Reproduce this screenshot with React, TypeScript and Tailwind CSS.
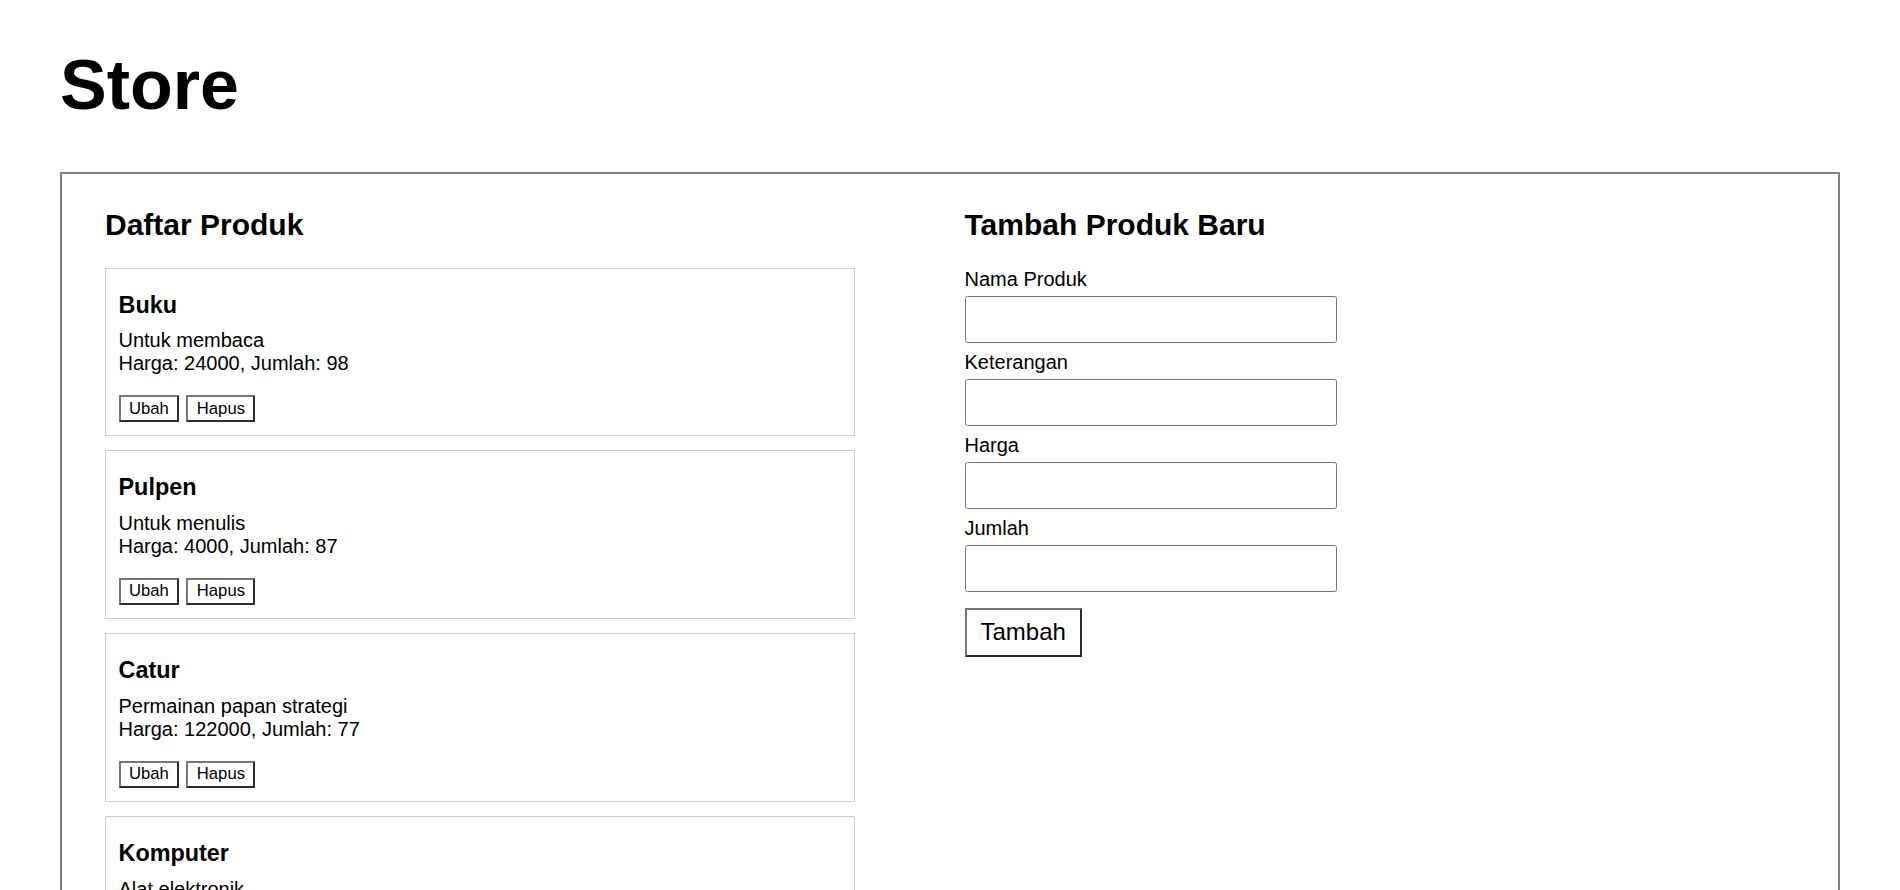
import { useState } from "react"

type Produk = {
  nama: string
  keterangan: string
  harga: number
  jumlah: number
}

const produkAwal: Produk[] = [
  { nama: "Buku", keterangan: "Untuk membaca", harga: 24000, jumlah: 98 },
  { nama: "Pulpen", keterangan: "Untuk menulis", harga: 4000, jumlah: 87 },
  { nama: "Catur", keterangan: "Permainan papan strategi", harga: 122000, jumlah: 77 },
  { nama: "Komputer", keterangan: "Alat elektronik", harga: 8500000, jumlah: 12 },
]

const fields = ["Nama Produk", "Keterangan", "Harga", "Jumlah"]

function SmallButton({ children }: { children: React.ReactNode }) {
  return (
    <button className="h-[27px] px-[8.5px] bg-white text-[16.67px] leading-none text-black border-2 border-t-[#767676] border-l-[#767676] border-r-[#2b2b2b] border-b-[#2b2b2b]">
      {children}
    </button>
  )
}

export default function App() {
  const [produk] = useState(produkAwal)

  return (
    <div className="min-h-screen bg-white px-[60px] text-[20px] text-black font-['Liberation_Sans',Arial,sans-serif]">
      <h1 className="pt-[45px] pb-[46px] text-[70px] font-bold leading-[1.15]">Store</h1>

      <div className="grid grid-cols-2 gap-[29px] border-2 border-[#808080] px-[43px] pt-[34px] pb-[40px]">
        {/* Daftar produk */}
        <div>
          <h2 className="mb-[25.5px] text-[30px] font-bold leading-[1.15]">Daftar Produk</h2>
          <div className="flex flex-col gap-[14px]">
            {produk.map((p) => (
              <div key={p.nama} className="max-w-[750px] border border-[#cccccc] px-[12.5px] pt-[13px] pb-[13px]">
                <h3 className="mt-[10px] text-[23.4px] font-bold leading-[1.15]">{p.nama}</h3>
                <p className="mt-[11px] leading-[23px]">
                  {p.keterangan}
                  <br />
                  Harga: {p.harga}, Jumlah: {p.jumlah}
                </p>
                <div className="mt-[20px] flex gap-[7px]">
                  <SmallButton>Ubah</SmallButton>
                  <SmallButton>Hapus</SmallButton>
                </div>
              </div>
            ))}
          </div>
        </div>

        {/* Form tambah */}
        <div>
          <h2 className="mb-[25.5px] text-[30px] font-bold leading-[1.15]">Tambah Produk Baru</h2>
          <form className="flex flex-col" onSubmit={(e) => e.preventDefault()}>
            {fields.map((f, i) => (
              <div key={f} className={i === 0 ? "" : "mt-[8px]"}>
                <label className="block leading-[23px]">{f}</label>
                <input
                  type="text"
                  className="mt-[5px] block h-[47px] w-[372px] rounded-[2.5px] border border-[#767676] bg-white px-[3px] text-[20px]"
                />
              </div>
            ))}
            <div className="mt-[16px]">
              <button
                type="submit"
                className="h-[49px] px-[14px] bg-white text-[24px] leading-none text-black border-2 border-t-[#767676] border-l-[#767676] border-r-[#2b2b2b] border-b-[#2b2b2b]"
              >
                Tambah
              </button>
            </div>
          </form>
        </div>
      </div>
    </div>
  )
}
